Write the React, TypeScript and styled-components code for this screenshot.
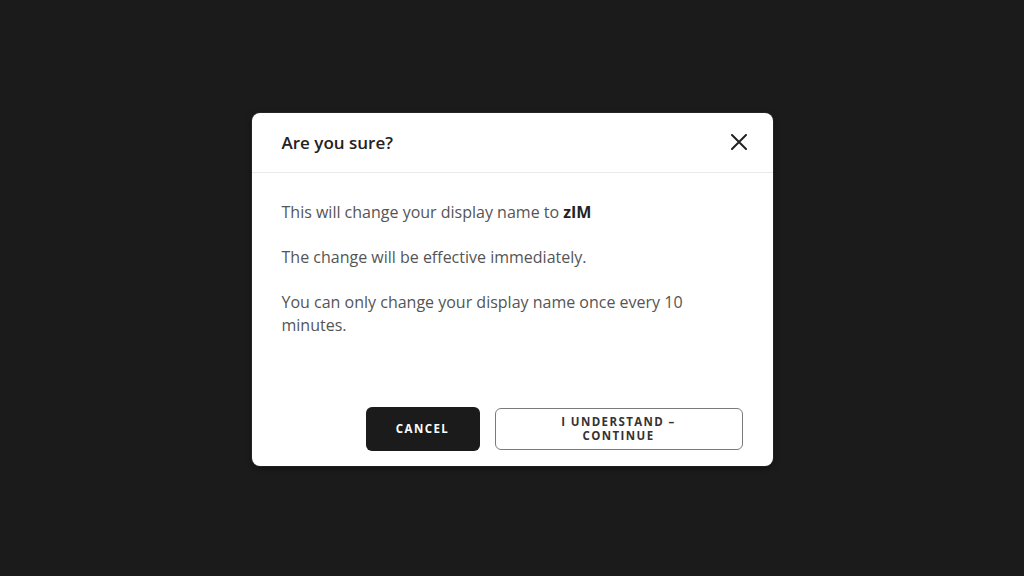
import styled, { createGlobalStyle } from "styled-components";

const GlobalStyle = createGlobalStyle`
  html, body {
    margin: 0;
    padding: 0;
    background: #1b1b1b;
  }
  * {
    box-sizing: border-box;
  }
`;

const Backdrop = styled.div`
  display: flex;
  align-items: center;
  justify-content: center;
  width: 100vw;
  height: 100vh;
  padding-top: 2px;
  background: #1b1b1b;
  font-family: "Open Sans", "Noto Sans", sans-serif;
`;

const Modal = styled.div`
  display: flex;
  flex-direction: column;
  width: 521px;
  height: 353px;
  background: #ffffff;
  border-radius: 8px;
  box-shadow: 0 0 0 1px rgba(255, 255, 255, 0.06), 0 2px 6px rgba(0, 0, 0, 0.4);
  overflow: hidden;
`;

const Header = styled.header`
  display: flex;
  align-items: center;
  justify-content: space-between;
  height: 60px;
  padding: 0 19px 0 30px;
  border-bottom: 1px solid #e9e9e9;
`;

const Title = styled.h2`
  margin: 0;
  font-size: 17px;
  font-weight: 600;
  color: #222222;
`;

const CloseButton = styled.button`
  display: flex;
  align-items: center;
  justify-content: center;
  width: 30px;
  height: 30px;
  padding: 0;
  border: none;
  background: none;
  color: #222222;
  cursor: pointer;
`;

const Body = styled.div`
  flex: 1;
  display: flex;
  flex-direction: column;
  gap: 22px;
  padding: 28px 30px 0;
`;

const Paragraph = styled.p`
  margin: 0;
  max-width: 425px;
  font-size: 16px;
  line-height: 23px;
  color: #555555;

  strong {
    font-weight: 700;
    color: #222222;
  }
`;

const Footer = styled.footer`
  display: flex;
  justify-content: flex-end;
  align-items: center;
  gap: 15px;
  padding: 0 30px 15px;
`;

const ActionButton = styled.button<{ $primary?: boolean; $wide?: boolean }>`
  display: flex;
  align-items: center;
  justify-content: center;
  width: ${(p) => (p.$wide ? "248px" : "114px")};
  height: ${(p) => (p.$primary ? "44px" : "42px")};
  padding: 0;
  border-radius: 6px;
  border: ${(p) => (p.$primary ? "none" : "1.5px solid #7a7a7a")};
  background: ${(p) => (p.$primary ? "#1b1b1b" : "#ffffff")};
  color: ${(p) => (p.$primary ? "#ffffff" : "#333333")};
  font-family: inherit;
  font-size: 11.5px;
  font-weight: 700;
  letter-spacing: 1.4px;
  line-height: 14px;
  text-transform: uppercase;
  cursor: pointer;
`;

const Label = styled.span<{ $wrap?: number }>`
  display: block;
  max-width: ${(p) => (p.$wrap ? `${p.$wrap}px` : "none")};
  text-align: center;
`;

const CloseIcon = () => (
  <svg width="16" height="16" viewBox="0 0 16 16" fill="none">
    <path d="M1 1L15 15M15 1L1 15" stroke="currentColor" strokeWidth="2" strokeLinecap="round" />
  </svg>
);

export default function App() {
  return (
    <>
      <GlobalStyle />
      <Backdrop>
        <Modal role="dialog" aria-modal="true">
          <Header>
            <Title>Are you sure?</Title>
            <CloseButton aria-label="Close">
              <CloseIcon />
            </CloseButton>
          </Header>
          <Body>
            <Paragraph>
              This will change your display name to <strong>zIM</strong>
            </Paragraph>
            <Paragraph>The change will be effective immediately.</Paragraph>
            <Paragraph>
              You can only change your display name once every 10 minutes.
            </Paragraph>
          </Body>
          <Footer>
            <ActionButton $primary>
              <Label>Cancel</Label>
            </ActionButton>
            <ActionButton $wide>
              <Label $wrap={130}>I understand – continue</Label>
            </ActionButton>
          </Footer>
        </Modal>
      </Backdrop>
    </>
  );
}
